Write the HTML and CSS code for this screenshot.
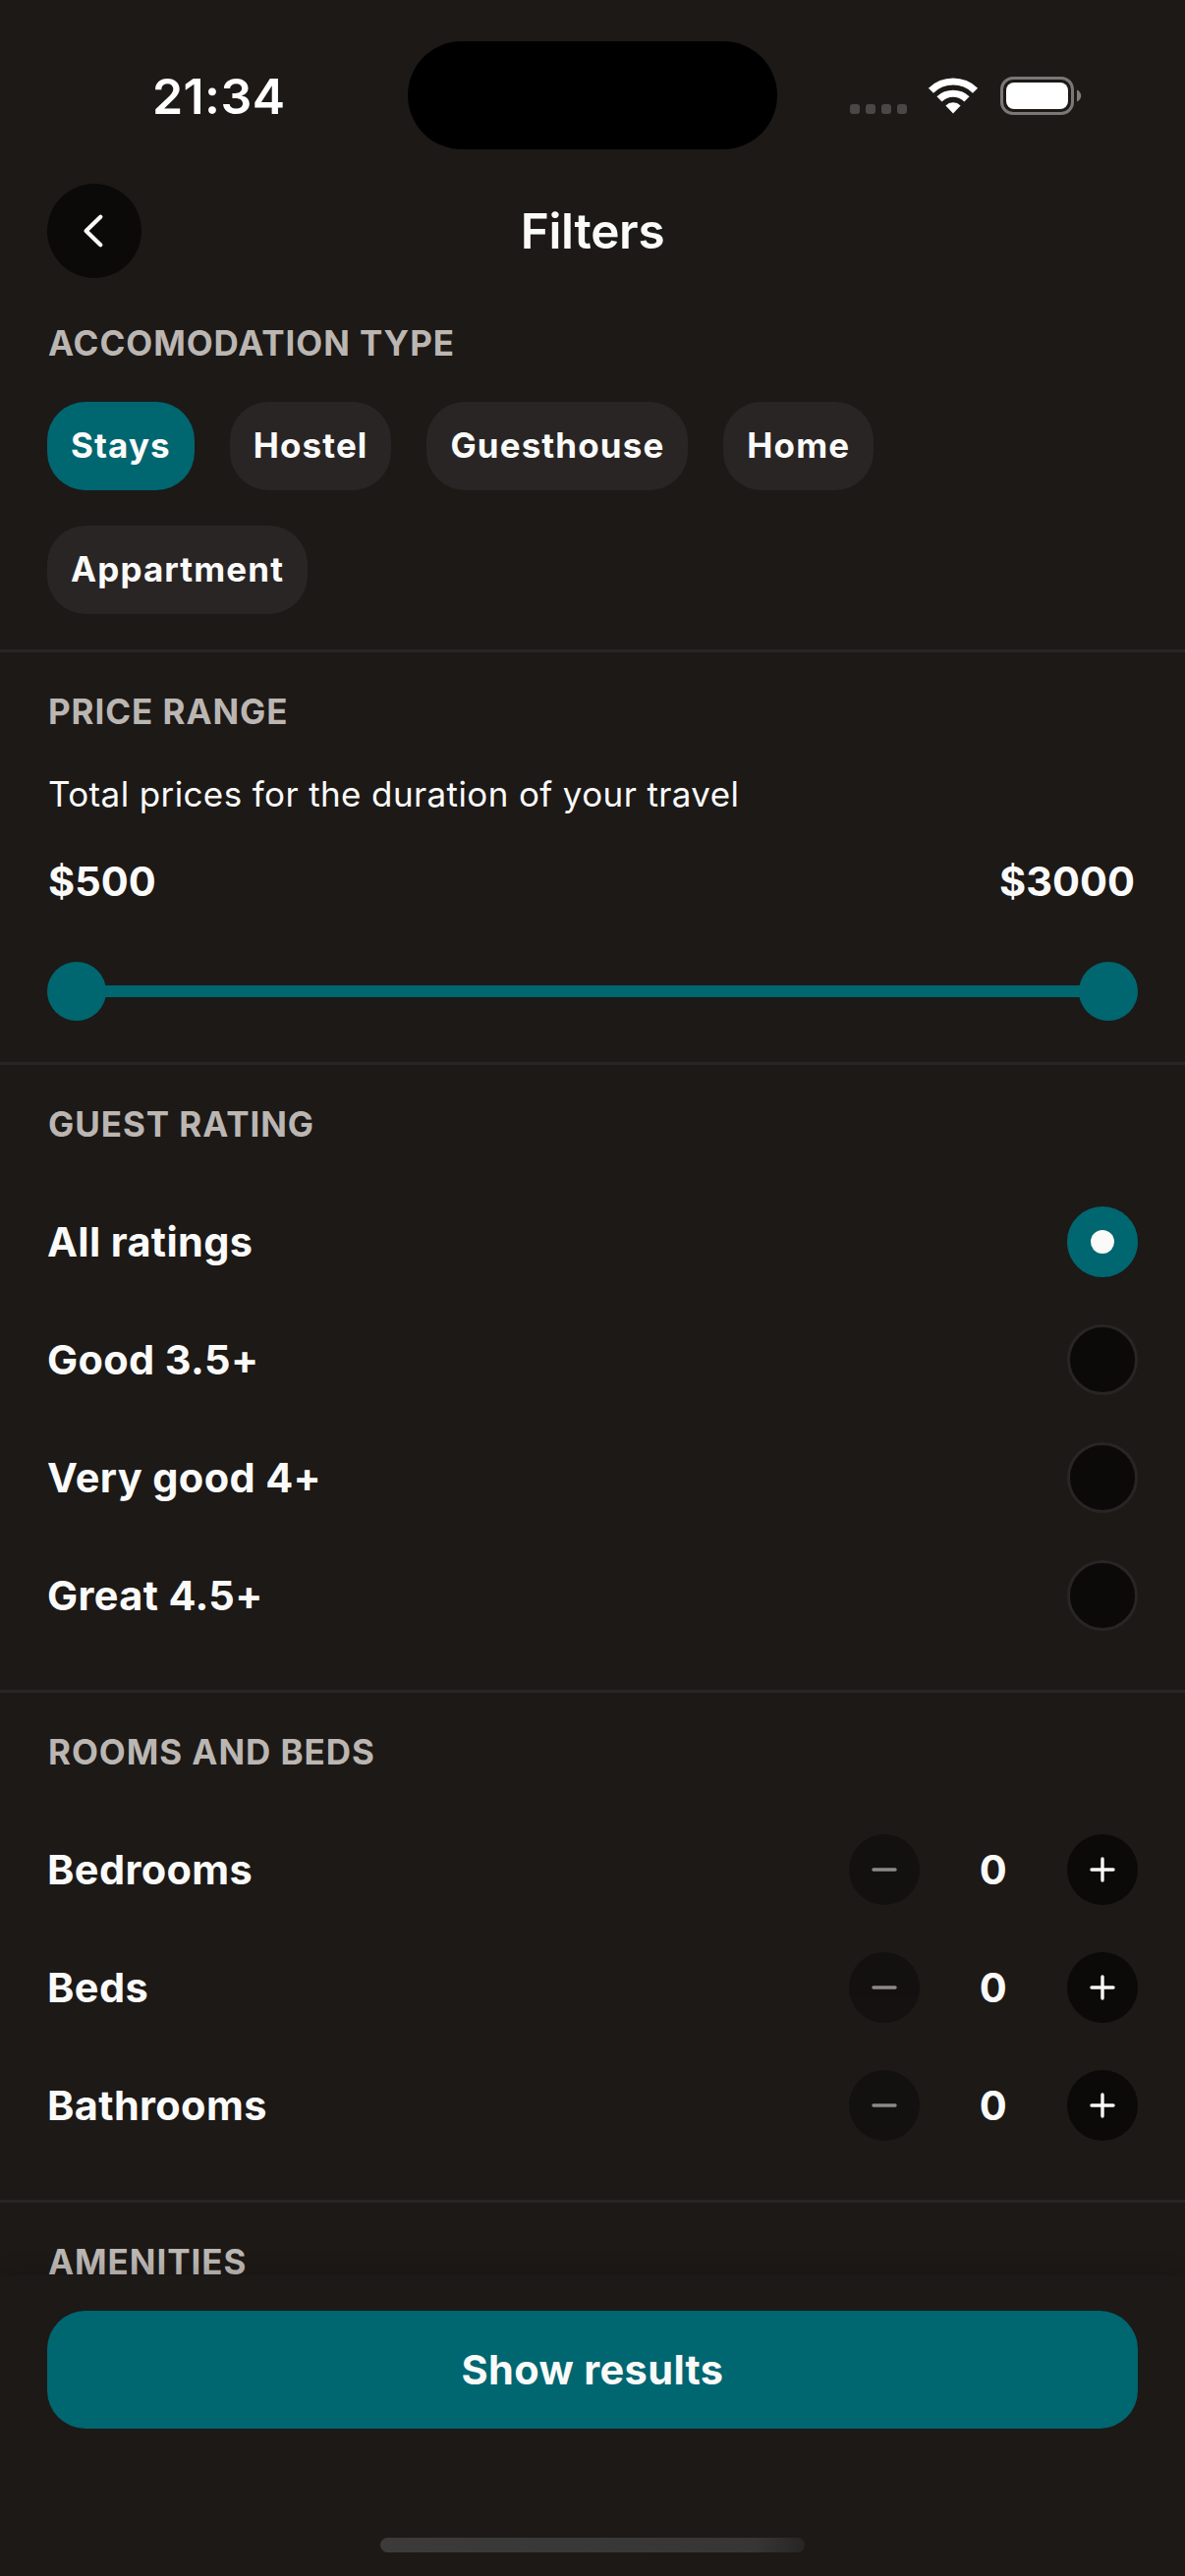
FILE: index.html
```
<!DOCTYPE html>
<html lang="en">
<head>
<meta charset="utf-8">
<title>Filters</title>
<link rel="stylesheet" href="styles.css">
</head>
<body>
<div class="screen">
  <div class="status-bar">
    <div class="status-time">21:34</div>
    <div class="island"></div>
    <div class="status-icons">
      <svg class="signal" width="58" height="10" viewBox="0 0 58 10">
        <rect x="0" width="10" height="10" rx="3"/>
        <rect x="16" width="10" height="10" rx="3"/>
        <rect x="32" width="10" height="10" rx="3"/>
        <rect x="48" width="10" height="10" rx="3"/>
      </svg>
      <svg class="wifi" width="52" height="38" viewBox="0 0 52 38">
        <path d="M.9 10.8A35.5 35.5 0 0 1 51.1 10.8L46 15.8A28 28 0 0 0 6 15.8Z"/>
        <path d="M9.4 19.3A24 24 0 0 1 42.6 19.3L37.4 24.5A16 16 0 0 0 14.6 24.5Z"/>
        <path d="M18.4 28.4A11 11 0 0 1 33.6 28.4L26 36.4Z"/>
      </svg>
      <svg class="battery" width="83" height="39" viewBox="0 0 83 39">
        <rect class="battery-case" x="1.5" y="1.5" width="72" height="36" rx="11.5"/>
        <rect class="battery-level" x="6" y="6" width="63" height="27" rx="8"/>
        <path class="battery-nub" d="M78 13.5C80.6 14.6 82.2 16.8 82.2 19.5S80.6 24.4 78 25.5Z"/>
      </svg>
    </div>
  </div>

  <header class="nav">
    <button class="back" aria-label="Back">
      <svg width="96" height="96" viewBox="0 0 96 96"><path d="M54.3 33.8L39.6 48L54.3 62.2"/></svg>
    </button>
    <h1 class="nav-title">Filters</h1>
    <div></div>
  </header>

  <main>
    <section class="section accommodation">
      <h2 class="section-title">ACCOMODATION TYPE</h2>
      <div class="chips">
        <button class="chip selected">Stays</button>
        <button class="chip">Hostel</button>
        <button class="chip">Guesthouse</button>
        <button class="chip">Home</button>
        <button class="chip">Appartment</button>
      </div>
    </section>

    <section class="section price">
      <h2 class="section-title">PRICE RANGE</h2>
      <p class="description">Total prices for the duration of your travel</p>
      <div class="price-values"><span>$500</span><span>$3000</span></div>
      <div class="slider">
        <span class="thumb"></span><span class="track"></span><span class="thumb"></span>
      </div>
    </section>

    <section class="section list-section">
      <h2 class="section-title">GUEST RATING</h2>
      <div class="rows">
        <div class="row"><span>All ratings</span><span class="radio checked"></span></div>
        <div class="row"><span>Good 3.5+</span><span class="radio"></span></div>
        <div class="row"><span>Very good 4+</span><span class="radio"></span></div>
        <div class="row"><span>Great 4.5+</span><span class="radio"></span></div>
      </div>
    </section>

    <section class="section list-section">
      <h2 class="section-title">ROOMS AND BEDS</h2>
      <div class="rows">
        <div class="row"><span>Bedrooms</span>
          <div class="stepper">
            <button class="step disabled" aria-label="Decrease"><svg width="72" height="72" viewBox="0 0 72 72"><path d="M25 36H47"/></svg></button>
            <span class="count">0</span>
            <button class="step" aria-label="Increase"><svg width="72" height="72" viewBox="0 0 72 72"><path d="M25 36H47M36 25V47"/></svg></button>
          </div>
        </div>
        <div class="row"><span>Beds</span>
          <div class="stepper">
            <button class="step disabled" aria-label="Decrease"><svg width="72" height="72" viewBox="0 0 72 72"><path d="M25 36H47"/></svg></button>
            <span class="count">0</span>
            <button class="step" aria-label="Increase"><svg width="72" height="72" viewBox="0 0 72 72"><path d="M25 36H47M36 25V47"/></svg></button>
          </div>
        </div>
        <div class="row"><span>Bathrooms</span>
          <div class="stepper">
            <button class="step disabled" aria-label="Decrease"><svg width="72" height="72" viewBox="0 0 72 72"><path d="M25 36H47"/></svg></button>
            <span class="count">0</span>
            <button class="step" aria-label="Increase"><svg width="72" height="72" viewBox="0 0 72 72"><path d="M25 36H47M36 25V47"/></svg></button>
          </div>
        </div>
      </div>
    </section>

    <section class="section amenities">
      <h2 class="section-title">AMENITIES</h2>
    </section>
  </main>

  <footer class="footer">
    <button class="show-results">Show results</button>
    <div class="home-indicator"></div>
  </footer>
</div>
</body>
</html>
```
FILE: styles.css
```
:root {
  --bg: #1c1917;
  --surface: #292524;
  --deep: #0c0a09;
  --teal: #006670;
  --text: #fafaf9;
  --muted: #bbb6b2;
}

* { box-sizing: border-box; }

body {
  margin: 0;
  background: var(--bg);
  color: var(--text);
  font-family: Inter, "Liberation Sans", sans-serif;
}

button {
  border: 0;
  padding: 0;
  color: inherit;
  font: inherit;
}

h1, h2, p { margin: 0; }
svg { display: block; }

.screen {
  display: flex;
  flex-direction: column;
  width: 1206px;
  height: 2622px;
  overflow: hidden;
}

/* Status bar */
.status-bar {
  display: grid;
  grid-template-columns: 415px 376px 415px;
  height: 187px;
}

.status-time {
  align-self: start;
  margin-top: 68px;
  padding-left: 155px;
  color: #fff;
  font-size: 50px;
  font-weight: 600;
  line-height: 60px;
  letter-spacing: 0.4px;
}

.island {
  align-self: start;
  height: 110px;
  margin-top: 42px;
  border-radius: 55px;
  background: #000;
}

.status-icons {
  display: flex;
  align-self: start;
  align-items: flex-end;
  height: 39px;
  margin-top: 78px;
  padding-left: 74px;
}

.signal { margin: 0 21px 1px 0; fill: #4a4846; }
.wifi { margin-right: 22px; fill: #fff; }
.battery-case { fill: none; stroke: #7a7876; stroke-width: 3; }
.battery-level { fill: #fff; }
.battery-nub { fill: #7f7d7b; }

/* Navigation header */
.nav {
  display: grid;
  grid-template-columns: 96px 1fr 96px;
  align-items: center;
  height: 96px;
  padding: 0 48px;
}

.back {
  width: 96px;
  height: 96px;
  border-radius: 50%;
  background: var(--deep);
}

.back path, .step path {
  fill: none;
  stroke: var(--text);
  stroke-linecap: round;
  stroke-linejoin: round;
}
.back path { stroke-width: 4.3px; }

.nav-title {
  font-size: 49.5px;
  font-weight: 600;
  line-height: 96px;
  letter-spacing: -0.3px;
  text-align: center;
}

/* Sections */
.section {
  padding: 36px 48px;
  border-bottom: 3px solid var(--surface);
}

.section-title {
  height: 48px;
  padding-left: 1px;
  color: var(--muted);
  font-size: 35px;
  font-weight: 700;
  line-height: 49px;
  letter-spacing: 0.93px;
}

.accommodation { padding-top: 42px; }

.chips {
  display: flex;
  flex-wrap: wrap;
  gap: 36px;
  margin-top: 36px;
}

.chip {
  height: 90px;
  padding: 0 24px 2px;
  border-radius: 39px;
  background: var(--surface);
  font-size: 35px;
  font-weight: 700;
  line-height: 88px;
  letter-spacing: 1.1px;
}
.chip.selected { background: var(--teal); }

.price { padding-bottom: 42px; }

.description {
  margin-top: 36px;
  padding-left: 1px;
  font-size: 35px;
  line-height: 49px;
  letter-spacing: 0.38px;
}

.price-values {
  display: flex;
  justify-content: space-between;
  margin-top: 38px;
  padding: 0 3px 0 1px;
  font-size: 41.5px;
  font-weight: 700;
  line-height: 52px;
}

.slider {
  display: flex;
  align-items: center;
  margin-top: 56px;
}

.thumb {
  width: 60px;
  height: 60px;
  border-radius: 50%;
  background: var(--teal);
}

.track {
  flex: 1;
  height: 12px;
  margin: 0 -6px;
  background: var(--teal);
}

.list-section { padding-bottom: 60px; }

.rows {
  display: flex;
  flex-direction: column;
  gap: 48px;
  margin-top: 60px;
}

.row {
  display: flex;
  align-items: center;
  justify-content: space-between;
  height: 72px;
  font-size: 41.5px;
  font-weight: 700;
  line-height: 72px;
  letter-spacing: 0.35px;
}

.radio {
  display: grid;
  place-items: center;
  width: 72px;
  height: 72px;
  border: 3px solid var(--surface);
  border-radius: 50%;
  background: var(--deep);
}

.radio.checked {
  border-color: var(--teal);
  background: var(--teal);
}

.radio.checked::after {
  content: "";
  width: 24px;
  height: 24px;
  border-radius: 50%;
  background: var(--text);
}

.stepper { display: flex; }

.count {
  width: 150px;
  text-align: center;
}

.step {
  width: 72px;
  height: 72px;
  border-radius: 50%;
  background: var(--deep);
}
.step path { stroke-width: 3.4px; }
.step.disabled { opacity: 0.5; }

.amenities { border-bottom: 0; }

/* Pinned footer */
.footer {
  position: absolute;
  top: 2316px;
  left: 0;
  display: flex;
  flex-direction: column;
  align-items: center;
  justify-content: space-between;
  width: 1206px;
  height: 306px;
  padding: 36px 48px 24px;
  background: var(--bg);
  box-shadow: 0 -6px 18px rgba(0, 0, 0, 0.12);
}

.show-results {
  width: 100%;
  height: 120px;
  border-radius: 39px;
  background: var(--teal);
  font-size: 41.5px;
  font-weight: 700;
  line-height: 120px;
  letter-spacing: 0.35px;
}

.home-indicator {
  width: 432px;
  height: 15px;
  border-radius: 8px;
  background: linear-gradient(100deg, #3c3b39 0%, #373634 88%, #272523 100%);
}
```
